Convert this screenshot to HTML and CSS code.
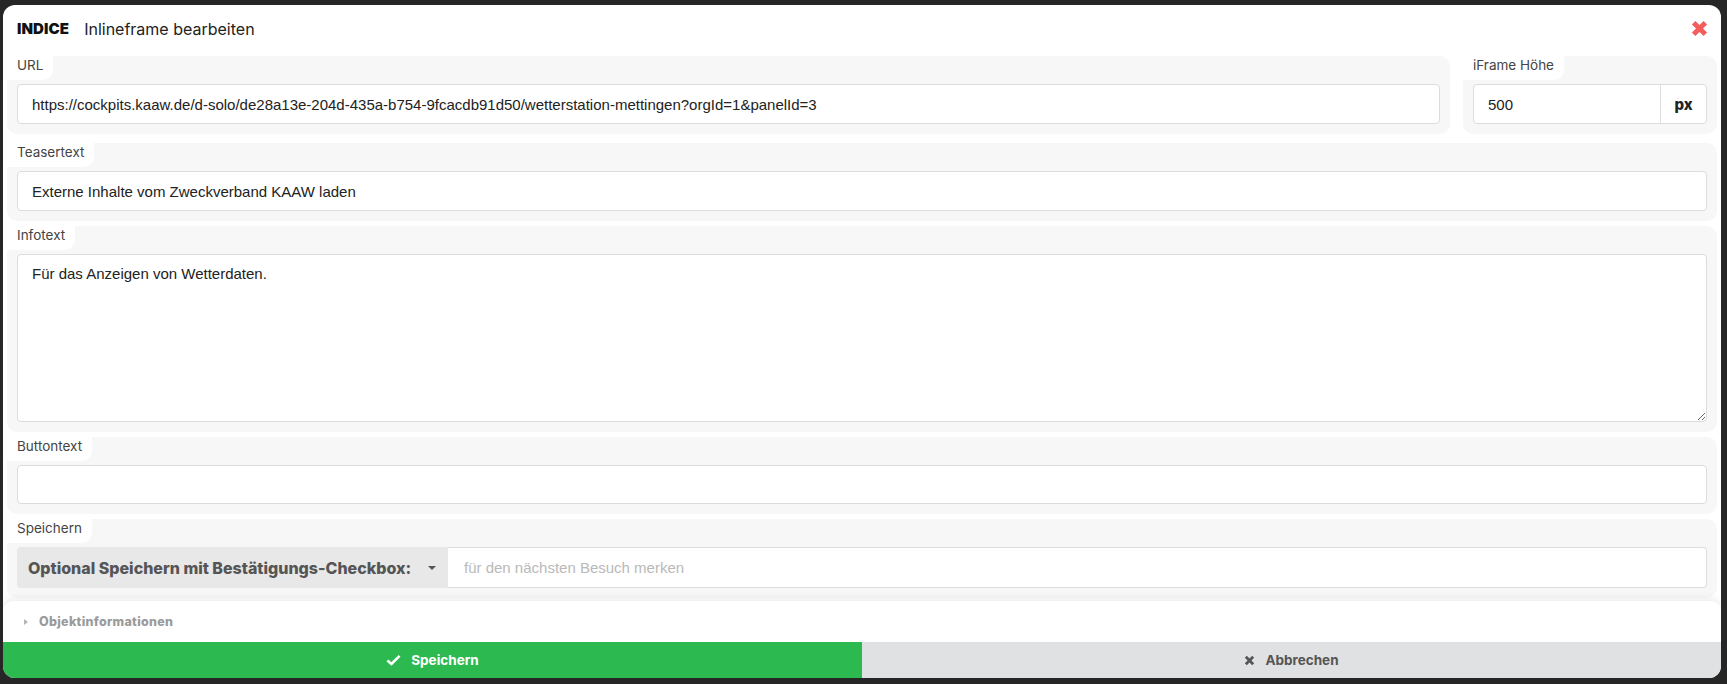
FILE: index.html
```html
<!DOCTYPE html>
<html lang="de">
<head>
<meta charset="utf-8">
<title>Inlineframe bearbeiten</title>
<link rel="stylesheet" href="styles.css">
</head>
<body>
<div class="modal">
  <div class="header">
    <span class="brand">INDICE</span>
    <span class="title">Inlineframe bearbeiten</span>
    <span class="close">
      <svg viewBox="0 0 16 16" width="17" height="17"><path d="M2.5 2.5 L13.5 13.5 M13.5 2.5 L2.5 13.5" stroke="#f35d5c" stroke-width="4.6" fill="none"/></svg>
    </span>
  </div>
  <div class="content">
    <div class="row">
      <div class="panel grow">
        <div class="label">URL</div>
        <div class="field"><span class="value">https://cockpits.kaaw.de/d-solo/de28a13e-204d-435a-b754-9fcacdb91d50/wetterstation-mettingen?orgId=1&amp;panelId=3</span></div>
      </div>
      <div class="panel side">
        <div class="label">iFrame Höhe</div>
        <div class="field group">
          <span class="value flex1">500</span>
          <span class="unit">px</span>
        </div>
      </div>
    </div>
    <div class="panel gap-big">
      <div class="label">Teasertext</div>
      <div class="field"><span class="value">Externe Inhalte vom Zweckverband KAAW laden</span></div>
    </div>
    <div class="panel">
      <div class="label">Infotext</div>
      <textarea class="area">Für das Anzeigen von Wetterdaten.</textarea>
    </div>
    <div class="panel">
      <div class="label">Buttontext</div>
      <div class="field short"></div>
    </div>
    <div class="panel">
      <div class="label">Speichern</div>
      <div class="igroup">
        <div class="addon">Optional Speichern mit Bestätigungs-Checkbox: <span class="caret"></span></div>
        <div class="ifield">für den nächsten Besuch merken</div>
      </div>
    </div>
  </div>
  <div class="objinfo"><span class="tri"></span>Objektinformationen</div>
  <div class="footer">
    <div class="btn save">
      <svg viewBox="0 0 16 12" width="15" height="12"><path d="M1.5 6.5 L5.8 10.3 L14.5 1.6" stroke="#fff" stroke-width="2.8" fill="none"/></svg>
      <span>Speichern</span>
    </div>
    <div class="btn cancel">
      <svg viewBox="0 0 12 12" width="11" height="11"><path d="M2 2 L10 10 M10 2 L2 10" stroke="#555" stroke-width="3" fill="none"/></svg>
      <span>Abbrechen</span>
    </div>
  </div>
</div>
</body>
</html>
```
FILE: styles.css
```css
* { box-sizing: border-box; }
html, body { margin: 0; padding: 0; }
body {
  background: #262626;
  width: 1727px;
  height: 684px;
  overflow: hidden;
  padding: 5px 0 0 3px;
  font-family: Inter, "Liberation Sans", sans-serif;
}
.modal {
  width: 1718px;
  height: 673px;
  background: #fff;
  border-radius: 12px;
  overflow: hidden;
  display: flex;
  flex-direction: column;
}
.header {
  height: 51px;
  flex: none;
  display: flex;
  align-items: center;
  padding: 0 13px 4px 14px;
}
.brand {
  font-weight: 900;
  font-size: 15px;
  color: #111;
  letter-spacing: 0.1px;
}
.title {
  margin-left: 15px;
  font-size: 16px;
  color: #222;
}
.close { margin-left: auto; display: flex; }
.content {
  flex: none;
  padding: 0 4px;
  display: flex;
  flex-direction: column;
  gap: 5px;
}
.row { display: flex; gap: 13px; }
.grow { flex: 1; }
.side { width: 254px; flex: none; }
.gap-big { margin-top: 4px; }
.panel {
  background: #f7f7f7;
  border-radius: 10px;
  padding: 0 10px 10px 10px;
}
.label {
  display: inline-block;
  margin-left: -10px;
  height: 24px;
  line-height: 19px;
  padding: 0 10px;
  background: #fff;
  border-bottom-right-radius: 10px;
  font-size: 13.5px;
  color: #444;
  vertical-align: top;
}
.field {
  margin-top: 4px;
  height: 40px;
  background: #fff;
  border: 1px solid #dcdcdc;
  border-radius: 4px;
  display: flex;
  align-items: center;
}
.field.short { height: 39px; }
.value {
  padding-left: 14px;
  font-family: "Liberation Sans", Arial, sans-serif;
  font-size: 15px;
  color: #222;
  white-space: nowrap;
}
.flex1 { flex: 1; }
.unit {
  width: 46px;
  height: 100%;
  border-left: 1px solid #dcdcdc;
  display: flex;
  align-items: center;
  justify-content: center;
  font-weight: 800;
  font-size: 15px;
  color: #222;
}
.area {
  display: block;
  margin-top: 4px;
  width: 100%;
  height: 168px;
  border: 1px solid #dcdcdc;
  border-radius: 4px;
  padding: 10px 14px;
  font-family: "Liberation Sans", Arial, sans-serif;
  font-size: 15px;
  color: #222;
  resize: vertical;
  outline: none;
}
.igroup {
  margin-top: 4px;
  height: 41px;
  display: flex;
}
.addon {
  width: 431px;
  background: #e8e8e8;
  border-radius: 4px 0 0 4px;
  display: flex;
  align-items: center;
  padding-left: 11px;
  font-weight: 800;
  font-size: 16px;
  color: #555;
  white-space: nowrap;
}
.caret {
  margin-left: auto;
  margin-right: 12px;
  width: 0;
  height: 0;
  border-left: 4px solid transparent;
  border-right: 4px solid transparent;
  border-top: 4px solid #555;
}
.ifield {
  flex: 1;
  background: #fff;
  border: 1px solid #dcdcdc;
  border-left: none;
  border-radius: 0 4px 4px 0;
  display: flex;
  align-items: center;
  padding-left: 16px;
  font-family: "Liberation Sans", Arial, sans-serif;
  font-size: 15px;
  color: #b9b9b9;
}
.objinfo {
  margin: 3px 0 0 0;
  flex: 1;
  background: #fff;
  border-radius: 10px 10px 0 0;
  box-shadow: 0 -3px 6px rgba(0,0,0,0.07);
  display: flex;
  align-items: center;
  padding-left: 21px;
  font-weight: 800;
  font-size: 12.5px;
  letter-spacing: 0.3px;
  color: #9a9a9a;
}
.tri {
  width: 0;
  height: 0;
  border-top: 3px solid transparent;
  border-bottom: 3px solid transparent;
  border-left: 4px solid #b5b5b5;
  margin-right: 11px;
}
.footer {
  height: 36px;
  flex: none;
  display: flex;
}
.btn {
  flex: 1;
  display: flex;
  align-items: center;
  justify-content: center;
  gap: 10px;
  font-weight: 700;
  font-size: 13.5px;
}
.save { background: #2cb94f; color: #fff; }
.cancel { background: #e0e1e2; color: #555; }
```
